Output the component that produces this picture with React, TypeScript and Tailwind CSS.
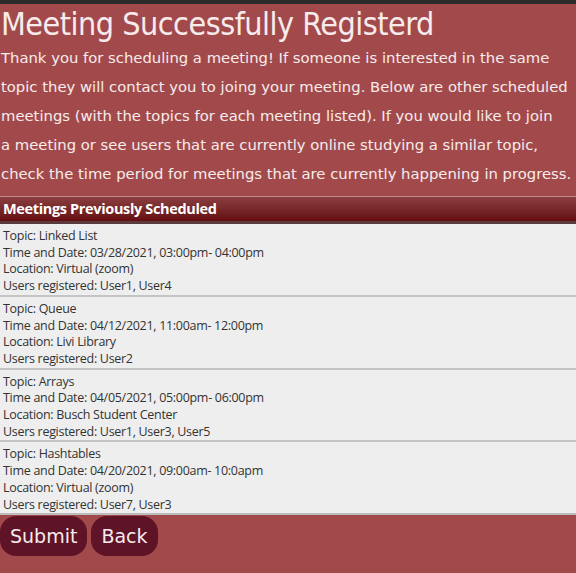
import React from "react";

const meetings = [
  {
    topic: "Linked List",
    time: "03/28/2021, 03:00pm- 04:00pm",
    location: "Virtual (zoom)",
    users: "User1, User4",
  },
  {
    topic: "Queue",
    time: "04/12/2021, 11:00am- 12:00pm",
    location: "Livi Library",
    users: "User2",
  },
  {
    topic: "Arrays",
    time: "04/05/2021, 05:00pm- 06:00pm",
    location: "Busch Student Center",
    users: "User1, User3, User5",
  },
  {
    topic: "Hashtables",
    time: "04/20/2021, 09:00am- 10:0apm",
    location: "Virtual (zoom)",
    users: "User7, User3",
  },
];

export default function App() {
  return (
    <div className="w-[576px] h-[573px] overflow-hidden bg-[#a24a4b] flex flex-col">
      <div className="h-[4px] bg-[#2b2b2b] shrink-0" />
      <h1 className="text-[#f7ebeb] text-[32px] leading-[37px] pt-[2px] pl-[1px] whitespace-nowrap font-['DejaVu_Sans_Condensed','DejaVu_Sans',sans-serif] tracking-[-0.5px]">
        Meeting Successfully Registerd
      </h1>
      <p className="text-[#f7ebeb] text-[14.8px] leading-[29px] pl-[1px] whitespace-nowrap font-['DejaVu_Sans',sans-serif]">
        Thank you for scheduling a meeting! If someone is interested in the same
        <br />
        topic they will contact you to joing your meeting. Below are other scheduled
        <br />
        meetings (with the topics for each meeting listed). If you would like to join
        <br />
        a meeting or see users that are currently online studying a similar topic,
        <br />
        check the time period for meetings that are currently happening in progress.
      </p>
      <div className="mt-[8px] border-t border-[#c48a8a] bg-gradient-to-b from-[#8a3e40] to-[#650d12] border-b-[3px] border-b-[#5a3a3a] h-[28px] flex items-center pl-[3px] shrink-0">
        <span className="text-white font-bold text-[14.5px] font-['Open_Sans',sans-serif] tracking-[-0.35px]">
          Meetings Previously Scheduled
        </span>
      </div>
      <div className="bg-[#eeeeee] border-b-2 border-[#bdbdbd] font-['Open_Sans',sans-serif] text-[#333333] text-[12.5px] leading-[16.7px] tracking-[-0.3px] shrink-0">
        {meetings.map((m, i) => (
          <div
            key={i}
            className={`px-[3px] pt-[4px] pb-[0px] ${i < meetings.length - 1 ? "border-b-2 border-[#c4c4c4]" : ""}`}
          >
            <div>Topic: {m.topic}</div>
            <div>Time and Date: {m.time}</div>
            <div>Location: {m.location}</div>
            <div>Users registered: {m.users}</div>
          </div>
        ))}
      </div>
      <div className="flex gap-[4px] mt-[1px] shrink-0">
        <button className="bg-[#5f1327] text-[#f7ebeb] text-[19px] h-[40px] px-[10px] rounded-[16px] font-['DejaVu_Sans',sans-serif]">
          Submit
        </button>
        <button className="bg-[#5f1327] text-[#f7ebeb] text-[19px] h-[40px] px-[10px] rounded-[16px] font-['DejaVu_Sans',sans-serif]">
          Back
        </button>
      </div>
    </div>
  );
}
